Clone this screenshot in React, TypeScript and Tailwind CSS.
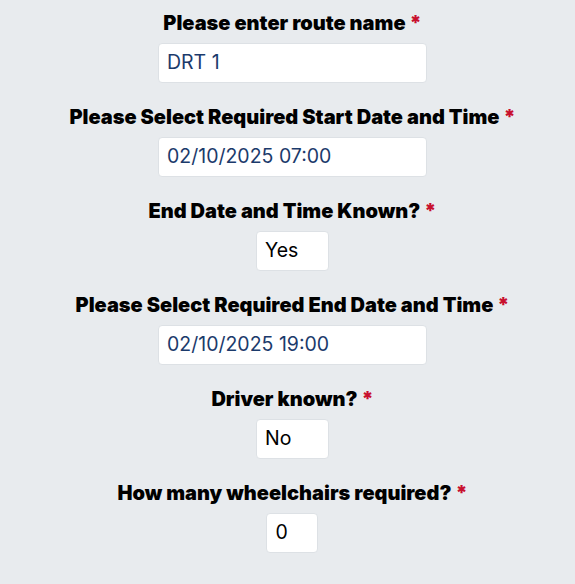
import React from 'react'

type Field = {
  label: string
  value: string
  width: string
  dark?: boolean
}

const fields: Field[] = [
  { label: 'Please enter route name', value: 'DRT 1', width: 'w-[269px]', dark: true },
  { label: 'Please Select Required Start Date and Time', value: '02/10/2025 07:00', width: 'w-[269px]', dark: true },
  { label: 'End Date and Time Known?', value: 'Yes', width: 'w-[73px]' },
  { label: 'Please Select Required End Date and Time', value: '02/10/2025 19:00', width: 'w-[269px]', dark: true },
  { label: 'Driver known?', value: 'No', width: 'w-[73px]' },
  { label: 'How many wheelchairs required?', value: '0', width: 'w-[52px]' },
]

const App = () => {
  return (
    <div className="min-h-[584px] w-[575px] bg-[#e8ebee] pt-[11px] pl-[10px] font-['Inter',sans-serif]">
      <form className="flex flex-col items-center">
        {fields.map((f) => (
          <div key={f.label} className="flex flex-col items-center mb-[22px]">
            <label className="h-[24px] leading-[24px] text-[20px] font-black text-black whitespace-nowrap">
              {f.label} <span className="text-[#c8102e]">*</span>
            </label>
            <div
              className={`${f.width} mt-[8px] h-[40px] flex items-center px-[8px] bg-white border border-[#dde1e5] rounded-[4px] text-[19.5px] ${
                f.dark ? 'text-[#1b3a6b]' : 'text-black'
              }`}
            >
              {f.value}
            </div>
          </div>
        ))}
      </form>
    </div>
  )
}

export default App
